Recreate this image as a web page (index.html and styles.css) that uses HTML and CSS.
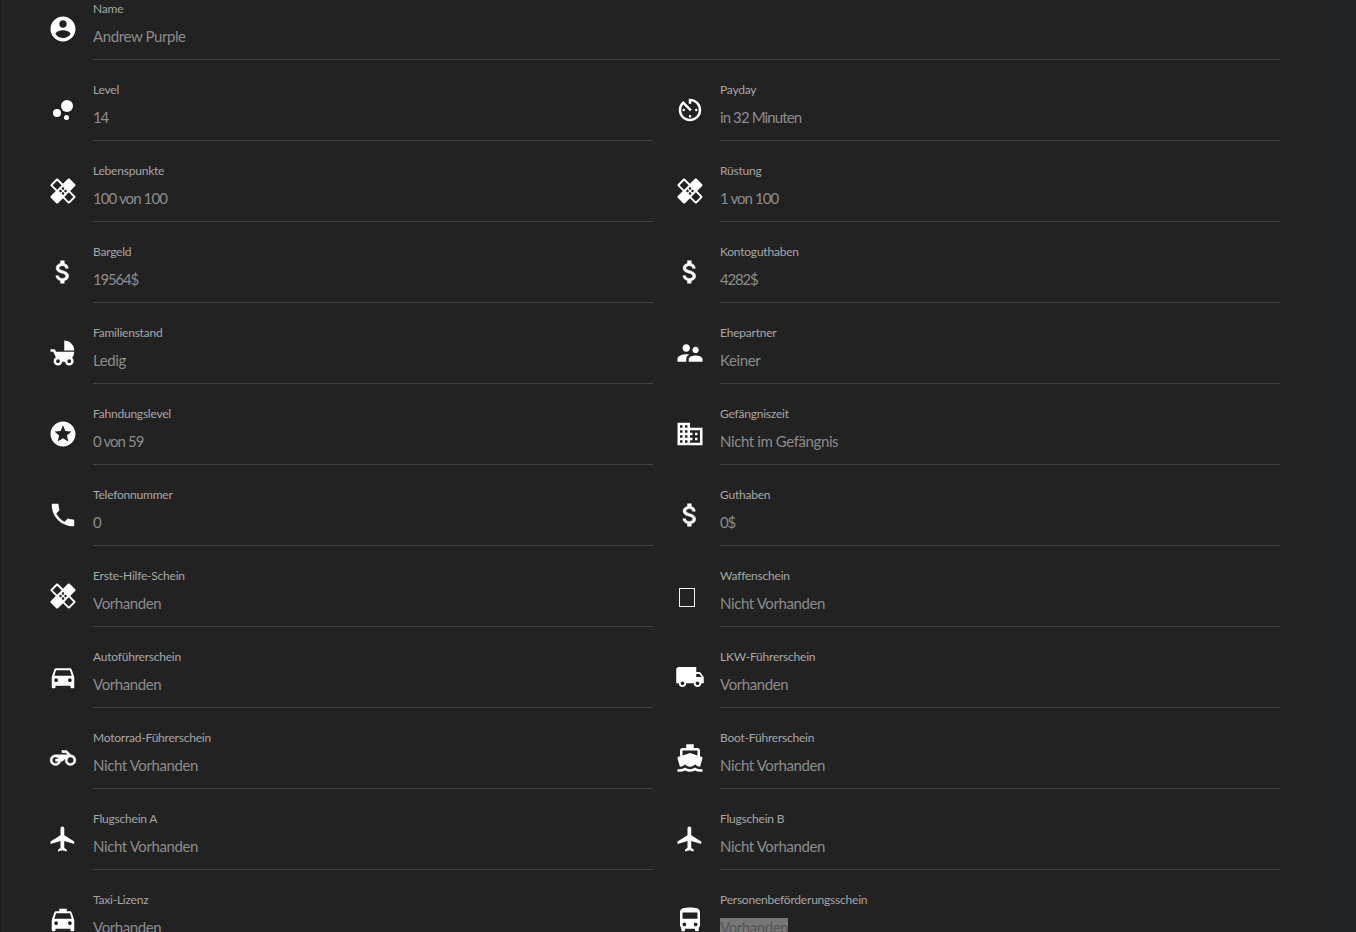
FILE: index.html
```html
<!DOCTYPE html>
<html lang="de">
<head>
<meta charset="utf-8">
<title>Profil</title>
<link rel="stylesheet" href="styles.css">
</head>
<body>
<main class="panel">
<div class="grid">
<div class="item wide"><svg class="icon" viewBox="0 0 24 24"><path d="M12 2C6.48 2 2 6.48 2 12s4.48 10 10 10 10-4.48 10-10S17.52 2 12 2zm0 3c1.66 0 3 1.34 3 3s-1.34 3-3 3-3-1.34-3-3 1.34-3 3-3zm0 14.2c-2.5 0-4.71-1.28-6-3.22.03-1.99 4-3.08 6-3.08 1.99 0 5.97 1.09 6 3.08-1.29 1.94-3.5 3.22-6 3.22z"/></svg><div class="text"><div class="label">Name</div><div class="value">Andrew Purple</div></div></div>

<div class="item"><svg class="icon" viewBox="0 0 24 24"><circle cx="7.2" cy="14.4" r="3.2"/><circle cx="14.8" cy="18" r="2"/><circle cx="15.2" cy="8.8" r="4.8"/></svg><div class="text"><div class="label">Level</div><div class="value digits">14</div></div></div>
<div class="item"><svg class="icon" viewBox="0 0 24 24"><path d="M11 17c0 .55.45 1 1 1s1-.45 1-1-.45-1-1-1-1 .45-1 1zm0-14v4h2V5.08c3.39.49 6 3.39 6 6.92 0 3.87-3.13 7-7 7s-7-3.13-7-7c0-1.68.59-3.22 1.58-4.42L12 13l1.41-1.41-6.8-6.8v.02C4.42 6.45 3 9.05 3 12c0 4.97 4.02 9 9 9 4.97 0 9-4.03 9-9s-4.03-9-9-9h-1zm7 9c0-.55-.45-1-1-1s-1 .45-1 1 .45 1 1 1 1-.45 1-1zM6 12c0 .55.45 1 1 1s1-.45 1-1-.45-1-1-1-1 .45-1 1z"/></svg><div class="text"><div class="label">Payday</div><div class="value digits-mixed">in 32 Minuten</div></div></div>

<div class="item"><svg class="icon" viewBox="0 0 24 24"><path d="M17.73 12.02l3.98-3.98c.39-.39.39-1.02 0-1.41l-4.34-4.34c-.39-.39-1.02-.39-1.41 0l-3.98 3.98L8 2.29C7.8 2.1 7.55 2 7.29 2c-.25 0-.51.1-.7.29L2.25 6.63c-.39.39-.39 1.02 0 1.41l3.98 3.98L2.25 16c-.39.39-.39 1.02 0 1.41l4.34 4.34c.39.39 1.02.39 1.41 0l3.98-3.98 3.98 3.98c.2.2.45.29.71.29.26 0 .51-.1.71-.29l4.34-4.34c.39-.39.39-1.02 0-1.41l-3.98-3.98zM12 9c.55 0 1 .45 1 1s-.45 1-1 1-1-.45-1-1 .45-1 1-1zm-4.71 1.96L3.66 7.34l3.63-3.63 3.62 3.62-3.62 3.63zM10 13c-.55 0-1-.45-1-1s.45-1 1-1 1 .45 1 1-.45 1-1 1zm2 2c-.55 0-1-.45-1-1s.45-1 1-1 1 .45 1 1-.45 1-1 1zm2-4c.55 0 1 .45 1 1s-.45 1-1 1-1-.45-1-1 .45-1 1-1zm2.66 9.34l-3.63-3.62 3.63-3.63 3.62 3.62-3.62 3.63z"/></svg><div class="text"><div class="label">Lebenspunkte</div><div class="value digits-mixed">100 von 100</div></div></div>
<div class="item"><svg class="icon" viewBox="0 0 24 24"><path d="M17.73 12.02l3.98-3.98c.39-.39.39-1.02 0-1.41l-4.34-4.34c-.39-.39-1.02-.39-1.41 0l-3.98 3.98L8 2.29C7.8 2.1 7.55 2 7.29 2c-.25 0-.51.1-.7.29L2.25 6.63c-.39.39-.39 1.02 0 1.41l3.98 3.98L2.25 16c-.39.39-.39 1.02 0 1.41l4.34 4.34c.39.39 1.02.39 1.41 0l3.98-3.98 3.98 3.98c.2.2.45.29.71.29.26 0 .51-.1.71-.29l4.34-4.34c.39-.39.39-1.02 0-1.41l-3.98-3.98zM12 9c.55 0 1 .45 1 1s-.45 1-1 1-1-.45-1-1 .45-1 1-1zm-4.71 1.96L3.66 7.34l3.63-3.63 3.62 3.62-3.62 3.63zM10 13c-.55 0-1-.45-1-1s.45-1 1-1 1 .45 1 1-.45 1-1 1zm2 2c-.55 0-1-.45-1-1s.45-1 1-1 1 .45 1 1-.45 1-1 1zm2-4c.55 0 1 .45 1 1s-.45 1-1 1-1-.45-1-1 .45-1 1-1zm2.66 9.34l-3.63-3.62 3.63-3.63 3.62 3.62-3.62 3.63z"/></svg><div class="text"><div class="label">Rüstung</div><div class="value digits-mixed">1 von 100</div></div></div>

<div class="item"><svg class="icon bold" viewBox="0 0 24 24"><path d="M11.8 10.9c-2.27-.59-3-1.2-3-2.15 0-1.09 1.01-1.85 2.7-1.85 1.78 0 2.44.85 2.5 2.1h2.21c-.07-1.72-1.12-3.3-3.21-3.81V3h-3v2.16c-1.94.42-3.5 1.68-3.5 3.61 0 2.31 1.91 3.46 4.7 4.13 2.5.6 3 1.48 3 2.41 0 .69-.49 1.79-2.7 1.79-2.06 0-2.87-.92-2.98-2.1h-2.2c.12 2.19 1.76 3.42 3.68 3.83V21h3v-2.15c1.95-.37 3.5-1.5 3.5-3.55 0-2.84-2.43-3.81-4.7-4.4z"/></svg><div class="text"><div class="label">Bargeld</div><div class="value digits">19564$</div></div></div>
<div class="item"><svg class="icon bold" viewBox="0 0 24 24"><path d="M11.8 10.9c-2.27-.59-3-1.2-3-2.15 0-1.09 1.01-1.85 2.7-1.85 1.78 0 2.44.85 2.5 2.1h2.21c-.07-1.72-1.12-3.3-3.21-3.81V3h-3v2.16c-1.94.42-3.5 1.68-3.5 3.61 0 2.31 1.91 3.46 4.7 4.13 2.5.6 3 1.48 3 2.41 0 .69-.49 1.79-2.7 1.79-2.06 0-2.87-.92-2.98-2.1h-2.2c.12 2.19 1.76 3.42 3.68 3.83V21h3v-2.15c1.95-.37 3.5-1.5 3.5-3.55 0-2.84-2.43-3.81-4.7-4.4z"/></svg><div class="text"><div class="label">Kontoguthaben</div><div class="value digits">4282$</div></div></div>

<div class="item"><svg class="icon" viewBox="0 0 24 24"><path d="M13 2v8h8c0-4.42-3.58-8-8-8zm6.32 13.89C20.37 14.54 21 12.84 21 11H6.44l-.95-2H2v2h2.22s1.89 4.07 2.12 4.42c-1.1.59-1.84 1.75-1.84 3.08C4.5 20.43 6.07 22 8 22c1.76 0 3.22-1.3 3.46-3h2.08c.24 1.7 1.7 3 3.46 3 1.93 0 3.5-1.57 3.5-3.5 0-1.04-.46-1.97-1.18-2.61zM8 20c-.83 0-1.5-.67-1.5-1.5S7.17 17 8 17s1.5.67 1.5 1.5S8.83 20 8 20zm9 0c-.83 0-1.5-.67-1.5-1.5S16.17 17 17 17s1.5.67 1.5 1.5S17.83 20 17 20z"/></svg><div class="text"><div class="label">Familienstand</div><div class="value">Ledig</div></div></div>
<div class="item"><svg class="icon" viewBox="0 0 24 24"><path d="M16.5 12c1.38 0 2.49-1.12 2.49-2.5S17.88 7 16.5 7C15.12 7 14 8.12 14 9.5s1.12 2.5 2.5 2.5zM9 11c1.66 0 2.99-1.34 2.99-3S10.66 5 9 5C7.34 5 6 6.34 6 8s1.34 3 3 3zm7.5 3c-1.83 0-5.5.92-5.5 2.75V19h11v-2.25c0-1.83-3.67-2.75-5.5-2.75zM9 13c-2.33 0-7 1.17-7 3.5V19h7v-2.25c0-.85.33-2.34 2.37-3.47C10.5 13.1 9.66 13 9 13z"/></svg><div class="text"><div class="label">Ehepartner</div><div class="value">Keiner</div></div></div>

<div class="item"><svg class="icon" viewBox="0 0 24 24"><path d="M11.99 2C6.47 2 2 6.48 2 12s4.47 10 9.99 10C17.52 22 22 17.52 22 12S17.52 2 11.99 2zm4.24 16L12 15.45 7.77 18l1.12-4.81-3.73-3.23 4.92-.42L12 5l1.92 4.53 4.92.42-3.73 3.23L16.23 18z"/></svg><div class="text"><div class="label">Fahndungslevel</div><div class="value digits-mixed">0 von 59</div></div></div>
<div class="item"><svg class="icon" viewBox="0 0 24 24"><path d="M12 7V3H2v18h20V7H12zM6 19H4v-2h2v2zm0-4H4v-2h2v2zm0-4H4V9h2v2zm0-4H4V5h2v2zm4 12H8v-2h2v2zm0-4H8v-2h2v2zm0-4H8V9h2v2zm0-4H8V5h2v2zm10 12h-8v-2h2v-2h-2v-2h2v-2h-2V9h8v10zm-2-8h-2v2h2v-2zm0 4h-2v2h2v-2z"/></svg><div class="text"><div class="label">Gefängniszeit</div><div class="value">Nicht im Gefängnis</div></div></div>

<div class="item"><svg class="icon" viewBox="0 0 24 24"><path d="M6.62 10.79c1.44 2.83 3.76 5.14 6.59 6.59l2.2-2.2c.27-.27.67-.36 1.02-.24 1.12.37 2.33.57 3.57.57.55 0 1 .45 1 1V20c0 .55-.45 1-1 1-9.39 0-17-7.61-17-17 0-.55.45-1 1-1h3.5c.55 0 1 .45 1 1 0 1.25.2 2.45.57 3.57.11.35.03.74-.25 1.02l-2.2 2.2z"/></svg><div class="text"><div class="label">Telefonnummer</div><div class="value digits">0</div></div></div>
<div class="item"><svg class="icon bold" viewBox="0 0 24 24"><path d="M11.8 10.9c-2.27-.59-3-1.2-3-2.15 0-1.09 1.01-1.85 2.7-1.85 1.78 0 2.44.85 2.5 2.1h2.21c-.07-1.72-1.12-3.3-3.21-3.81V3h-3v2.16c-1.94.42-3.5 1.68-3.5 3.61 0 2.31 1.91 3.46 4.7 4.13 2.5.6 3 1.48 3 2.41 0 .69-.49 1.79-2.7 1.79-2.06 0-2.87-.92-2.98-2.1h-2.2c.12 2.19 1.76 3.42 3.68 3.83V21h3v-2.15c1.95-.37 3.5-1.5 3.5-3.55 0-2.84-2.43-3.81-4.7-4.4z"/></svg><div class="text"><div class="label">Guthaben</div><div class="value digits">0$</div></div></div>

<div class="item"><svg class="icon" viewBox="0 0 24 24"><path d="M17.73 12.02l3.98-3.98c.39-.39.39-1.02 0-1.41l-4.34-4.34c-.39-.39-1.02-.39-1.41 0l-3.98 3.98L8 2.29C7.8 2.1 7.55 2 7.29 2c-.25 0-.51.1-.7.29L2.25 6.63c-.39.39-.39 1.02 0 1.41l3.98 3.98L2.25 16c-.39.39-.39 1.02 0 1.41l4.34 4.34c.39.39 1.02.39 1.41 0l3.98-3.98 3.98 3.98c.2.2.45.29.71.29.26 0 .51-.1.71-.29l4.34-4.34c.39-.39.39-1.02 0-1.41l-3.98-3.98zM12 9c.55 0 1 .45 1 1s-.45 1-1 1-1-.45-1-1 .45-1 1-1zm-4.71 1.96L3.66 7.34l3.63-3.63 3.62 3.62-3.62 3.63zM10 13c-.55 0-1-.45-1-1s.45-1 1-1 1 .45 1 1-.45 1-1 1zm2 2c-.55 0-1-.45-1-1s.45-1 1-1 1 .45 1 1-.45 1-1 1zm2-4c.55 0 1 .45 1 1s-.45 1-1 1-1-.45-1-1 .45-1 1-1zm2.66 9.34l-3.63-3.62 3.63-3.63 3.62 3.62-3.62 3.63z"/></svg><div class="text"><div class="label">Erste-Hilfe-Schein</div><div class="value">Vorhanden</div></div></div>
<div class="item"><div class="icon-slot"><span class="tofu"></span></div><div class="text"><div class="label">Waffenschein</div><div class="value">Nicht Vorhanden</div></div></div>

<div class="item"><svg class="icon" viewBox="0 0 24 24"><path d="M18.92 6.01C18.72 5.42 18.16 5 17.5 5h-11c-.66 0-1.21.42-1.42 1.01L3 12v8c0 .55.45 1 1 1h1c.55 0 1-.45 1-1v-1h12v1c0 .55.45 1 1 1h1c.55 0 1-.45 1-1v-8l-2.08-5.99zM6.5 16c-.83 0-1.5-.67-1.5-1.5S5.67 13 6.5 13s1.5.67 1.5 1.5S7.33 16 6.5 16zm11 0c-.83 0-1.5-.67-1.5-1.5s.67-1.5 1.5-1.5 1.5.67 1.5 1.5-.67 1.5-1.5 1.5zM5 11l1.5-4.5h11L19 11H5z"/></svg><div class="text"><div class="label">Autoführerschein</div><div class="value">Vorhanden</div></div></div>
<div class="item"><svg class="icon" viewBox="0 0 24 24"><path d="M20 8h-3V4H3c-1.1 0-2 .9-2 2v11h2c0 1.66 1.34 3 3 3s3-1.34 3-3h6c0 1.66 1.34 3 3 3s3-1.34 3-3h2v-5l-3-4zM6 18.5c-.83 0-1.5-.67-1.5-1.5s.67-1.5 1.5-1.5 1.5.67 1.5 1.5-.67 1.5-1.5 1.5zm13.5-9l1.96 2.5H17V9.5h2.5zm-1.5 9c-.83 0-1.5-.67-1.5-1.5s.67-1.5 1.5-1.5 1.5.67 1.5 1.5-.67 1.5-1.5 1.5z"/></svg><div class="text"><div class="label">LKW-Führerschein</div><div class="value">Vorhanden</div></div></div>

<div class="item"><svg class="icon bold" viewBox="-2 -2 28 28"><path d="M19.44 9.03L15.41 5H11v2h3.59l2 2H5c-2.8 0-5 2.2-5 5s2.2 5 5 5c2.46 0 4.45-1.69 4.9-4h1.65l2.77-2.77c-.21.54-.32 1.14-.32 1.77 0 2.8 2.2 5 5 5s5-2.2 5-5c0-2.65-1.97-4.77-4.56-4.97zM7.82 15C7.4 16.15 6.28 17 5 17c-1.63 0-3-1.37-3-3s1.37-3 3-3c1.28 0 2.4.85 2.82 2H5v2h2.82zM19 17c-1.66 0-3-1.34-3-3s1.34-3 3-3 3 1.34 3 3-1.34 3-3 3z"/></svg><div class="text"><div class="label">Motorrad-Führerschein</div><div class="value">Nicht Vorhanden</div></div></div>
<div class="item"><svg class="icon" viewBox="0 0 24 24"><path d="M20 21c-1.39 0-2.78-.47-4-1.32-2.44 1.71-5.56 1.71-8 0C6.78 20.53 5.39 21 4 21H2v2h2c1.38 0 2.74-.35 4-.99 2.52 1.29 5.48 1.29 8 0 1.26.65 2.62.99 4 .99h2v-2h-2zM3.95 19H4c1.6 0 3.02-.88 4-2 .98 1.12 2.4 2 4 2s3.02-.88 4-2c.98 1.12 2.4 2 4 2h.05l1.89-6.68c.08-.26.06-.54-.06-.78s-.34-.42-.6-.5L20 10.62V6c0-1.1-.9-2-2-2h-3V1H9v3H6c-1.1 0-2 .9-2 2v4.62l-1.29.42c-.26.08-.48.26-.6.5s-.15.52-.06.78L3.95 19zM6 6h12v3.97L12 8 6 9.97V6z"/></svg><div class="text"><div class="label">Boot-Führerschein</div><div class="value">Nicht Vorhanden</div></div></div>

<div class="item"><svg class="icon" viewBox="0 0 24 24"><path d="M21 16v-2l-8-5V3.5c0-.83-.67-1.5-1.5-1.5S10 2.67 10 3.5V9l-8 5v2l8-2.5V19l-2 1.5V22l3.5-1 3.5 1v-1.5L13 19v-5.5l8 2.5z"/></svg><div class="text"><div class="label">Flugschein A</div><div class="value">Nicht Vorhanden</div></div></div>
<div class="item"><svg class="icon" viewBox="0 0 24 24"><path d="M21 16v-2l-8-5V3.5c0-.83-.67-1.5-1.5-1.5S10 2.67 10 3.5V9l-8 5v2l8-2.5V19l-2 1.5V22l3.5-1 3.5 1v-1.5L13 19v-5.5l8 2.5z"/></svg><div class="text"><div class="label">Flugschein B</div><div class="value">Nicht Vorhanden</div></div></div>

<div class="item"><svg class="icon" viewBox="0 0 24 24"><path d="M18.92 6.01C18.72 5.42 18.16 5 17.5 5H15V3H9v2H6.5c-.66 0-1.21.42-1.42 1.01L3 12v8c0 .55.45 1 1 1h1c.55 0 1-.45 1-1v-1h12v1c0 .55.45 1 1 1h1c.55 0 1-.45 1-1v-8l-2.08-5.99zM6.5 16c-.83 0-1.5-.67-1.5-1.5S5.67 13 6.5 13s1.5.67 1.5 1.5S7.33 16 6.5 16zm11 0c-.83 0-1.5-.67-1.5-1.5s.67-1.5 1.5-1.5 1.5.67 1.5 1.5-.67 1.5-1.5 1.5zM5 11l1.5-4.5h11L19 11H5z"/></svg><div class="text"><div class="label">Taxi-Lizenz</div><div class="value">Vorhanden</div></div></div>
<div class="item"><svg class="icon" viewBox="0 0 24 24"><path d="M4 16c0 .88.39 1.67 1 2.22V20c0 .55.45 1 1 1h1c.55 0 1-.45 1-1v-1h8v1c0 .55.45 1 1 1h1c.55 0 1-.45 1-1v-1.78c.61-.55 1-1.34 1-2.22V6c0-3.5-3.58-4-8-4s-8 .5-8 4v10zm3.5 1c-.83 0-1.5-.67-1.5-1.5S6.67 14 7.5 14s1.5.67 1.5 1.5S8.33 17 7.5 17zm9 0c-.83 0-1.5-.67-1.5-1.5s.67-1.5 1.5-1.5 1.5.67 1.5 1.5-.67 1.5-1.5 1.5zm1.5-6H6V6h12v5z"/></svg><div class="text"><div class="label">Personenbeförderungsschein</div><div class="value"><span class="selected">Vorhanden</span></div></div></div>
</div>
</main>
</body>
</html>
```

FILE: styles.css
```css
html, body {
  margin: 0;
  height: 932px;
  overflow: hidden;
  background: #1f2326;
}

.panel {
  width: 1327px;
  height: 953px;
  margin-top: -21px;
  box-sizing: border-box;
  padding: 0 47px 0 47px;
  background: #222222;
  border-left: 1px solid #1c1c1c;
  font-family: "Lato", "Noto Sans", sans-serif;
}

.grid {
  display: grid;
  grid-template-columns: 605px 605px;
  column-gap: 22px;
}

.item {
  display: flex;
  align-items: flex-start;
  height: 81px;
}

.wide {
  grid-column: 1 / -1;
}

.icon,
.icon-slot {
  flex: none;
  width: 30px;
  height: 30px;
  margin: 35px 15px 0 0;
  fill: #ffffff;
}

.bold {
  stroke: #ffffff;
  stroke-width: 0.4;
}

.icon-slot {
  position: relative;
}

.tofu {
  position: absolute;
  left: 4px;
  top: 7px;
  width: 14px;
  height: 17px;
  border: 1px solid #f2f2f2;
}

.text {
  flex: 1;
  height: 81px;
  box-sizing: border-box;
  padding-top: 22px;
  border-bottom: 1px solid #424242;
}

.label {
  font-size: 12px;
  line-height: 16px;
  letter-spacing: -0.22px;
  color: #a7a7a7;
}

.value {
  margin-top: 7px;
  font-size: 15px;
  line-height: 24px;
  letter-spacing: -0.4px;
  color: #8c8c8c;
}

.digits {
  letter-spacing: -1.2px;
}

.digits-mixed {
  letter-spacing: -0.9px;
}

.selected {
  background: #777777;
  color: #555555;
}
```
